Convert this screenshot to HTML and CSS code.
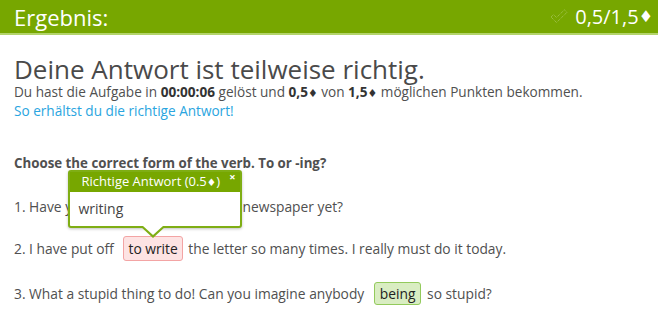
FILE: index.html
```html
<!DOCTYPE html>
<html lang="de">
<head>
    <meta charset="UTF-8">
    <title>Ergebnis</title>
    <link rel="stylesheet" href="styles.css">
</head>
<body>

    <!-- Result header -->
    <div class="result-bar">
        <span class="result-title">Ergebnis:</span>
        <span class="result-score">
            <svg class="check-icon" width="18" height="15" viewBox="0 0 18 15">
                <polygon points="1,8 3.5,5.5 6.5,8.5 14.5,0.8 17,3.3 6.5,13.5" />
            </svg>
            0,5/1,5<span class="diamond">♦</span>
        </span>
    </div>

    <div class="result-body">
        <h1>Deine Antwort ist teilweise richtig.</h1>
        <p class="summary">
            Du hast die Aufgabe in <b>00:00:06</b> gelöst und <b>0,5<span class="diamond">♦</span></b> von <b>1,5<span class="diamond">♦</span></b> möglichen Punkten bekommen.<br>
            <a href="#">So erhältst du die richtige Antwort!</a>
        </p>

        <!-- Exercise -->
        <div class="exercise">
            <p class="task">Choose the correct form of the verb. To or -ing?</p>
            <p class="sentence sentence-first">1. Have you finished <span class="gap">reading</span> the newspaper yet?</p>
            <p class="sentence">2. I have put off <span class="gap gap-wrong">to write
                <span class="tooltip">
                    <span class="tooltip-head">Richtige Antwort (0.5<span class="diamond">♦</span>)<span class="tooltip-close">×</span></span>
                    <span class="tooltip-text">writing</span>
                </span>
            </span> the letter so many times. I really must do it today.</p>
            <p class="sentence sentence-last">3. What a stupid thing to do! Can you imagine anybody <span class="gap gap-right">being</span> so stupid?</p>
        </div>
    </div>

</body>
</html>
```

FILE: styles.css
```css
body {
    margin: 0;
    font-family: "Open Sans", "DejaVu Sans", sans-serif;
    color: #505050;
    background-color: #fff;
}

.diamond {
    font-family: "DejaVu Sans", sans-serif;
    font-size: 0.8em;
}

/* header bar */
.result-bar {
    display: flex;
    justify-content: space-between;
    align-items: center;
    height: 33px;
    padding: 0 5px 0 14px;
    background-color: #77a700;
    border-bottom: 2px solid #b3d46c;
    color: #fff;
}

.result-title {
    font-size: 22px;
}

.result-score {
    display: flex;
    align-items: center;
    font-size: 20px;
}

.check-icon {
    margin-right: 7px;
}

.check-icon polygon {
    fill: none;
    stroke: rgba(255, 255, 255, 0.45);
    stroke-width: 0.8;
    stroke-dasharray: 1 1;
}

/* result text */
.result-body {
    padding: 0 14px;
}

h1 {
    margin: 20px 0 0;
    font-size: 26px;
    font-weight: normal;
    line-height: 28px;
    color: #4a4a4a;
}

.summary {
    margin: 0;
    font-size: 13.6px;
    line-height: 17px;
}

.summary b {
    color: #333;
}

.summary a {
    color: #2aa5e0;
    text-decoration: none;
}

/* exercise */
.exercise {
    margin-top: 36px;
}

.task {
    margin: 0;
    font-size: 13.3px;
    font-weight: bold;
    line-height: 17px;
}

.sentence {
    margin: 17px 0 0;
    font-size: 13.8px;
    line-height: 24px;
}

.sentence-first {
    margin-top: 22px;
}

.sentence-last {
    margin-top: 21px;
}

.gap {
    position: relative;
    display: inline-block;
    margin: 0 2px 0 6px;
    padding: 0 4px;
    line-height: 23px;
    border: 1px solid #ccc;
    border-radius: 3px;
    color: #222;
}

.gap-wrong {
    background-color: #fde3e3;
    border-color: #f3a4a4;
}

.gap-right {
    padding: 0 5px;
    line-height: 21px;
    background-color: #d9edc2;
    border-color: #93ca5c;
}

/* correct answer tooltip */
.tooltip {
    position: absolute;
    left: -56px;
    bottom: calc(100% + 9px);
    display: block;
    width: 170px;
    border: 2px solid #7fae14;
    border-radius: 3px;
    background-color: #fff;
    box-shadow: 0 1px 3px rgba(0, 0, 0, 0.25);
    color: #444;
}

.tooltip::before,
.tooltip::after {
    content: "";
    position: absolute;
    left: 70px;
    top: 100%;
    border-style: solid;
    border-color: transparent;
}

.tooltip::before {
    border-width: 12px 13px 0;
    border-top-color: #7fae14;
}

.tooltip::after {
    left: 73px;
    border-width: 9px 10px 0;
    border-top-color: #fff;
}

.tooltip-head {
    position: relative;
    display: block;
    padding: 0 0 0 11px;
    line-height: 19px;
    background-color: #77a700;
    color: #fff;
    font-size: 13px;
}

.tooltip-close {
    position: absolute;
    right: 5px;
    top: -2px;
    font-size: 11px;
    font-weight: bold;
    line-height: 14px;
}

.tooltip-text {
    display: block;
    padding: 7px 8px 7px;
    line-height: 20px;
    font-size: 14px;
}
```
